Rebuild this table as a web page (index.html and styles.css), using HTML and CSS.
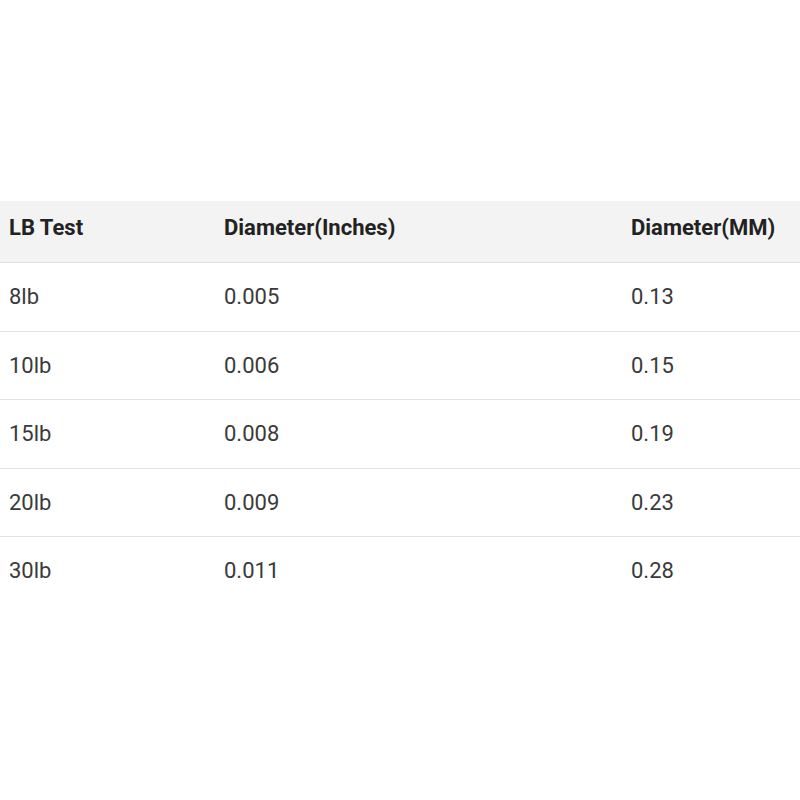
FILE: index.html
```html
<!DOCTYPE html>
<html>
<head>
<meta charset="utf-8">
<link rel="stylesheet" href="styles.css">
</head>
<body>
<div class="page">
  <table class="chart">
    <colgroup>
      <col class="c1"><col class="c2"><col class="c3">
    </colgroup>
    <thead>
      <tr><th>LB Test</th><th>Diameter(Inches)</th><th>Diameter(MM)</th></tr>
    </thead>
    <tbody>
      <tr><td>8lb</td><td>0.005</td><td>0.13</td></tr>
      <tr><td>10lb</td><td>0.006</td><td>0.15</td></tr>
      <tr><td>15lb</td><td>0.008</td><td>0.19</td></tr>
      <tr><td>20lb</td><td>0.009</td><td>0.23</td></tr>
      <tr><td>30lb</td><td>0.011</td><td>0.28</td></tr>
    </tbody>
  </table>
</div>
</body>
</html>
```
FILE: styles.css
```css
html, body {
  margin: 0;
  padding: 0;
  background: #ffffff;
}
.page {
  padding-top: 201px;
  width: 800px;
}
.chart {
  width: 800px;
  border-collapse: collapse;
  table-layout: fixed;
  font-family: Roboto, "Liberation Sans", sans-serif;
  font-size: 22px;
}
.c1 { width: 224px; }
.c2 { width: 407px; }
.c3 { width: 169px; }
.chart th {
  background: #f3f3f3;
  color: #222;
  font-weight: 700;
  text-align: left;
  height: 53px;
  padding: 0 0 8px 9px;
  border-bottom: 1px solid #e2e2e2;
  white-space: nowrap;
}
.chart th + th, .chart td + td { padding-left: 0; }
.chart td {
  color: #3a3a3a;
  height: 67.5px;
  padding: 0 0 0 9px;
  border-bottom: 1px solid #e2e2e2;
}
.chart tbody tr:last-child td { border-bottom: none; }
```
